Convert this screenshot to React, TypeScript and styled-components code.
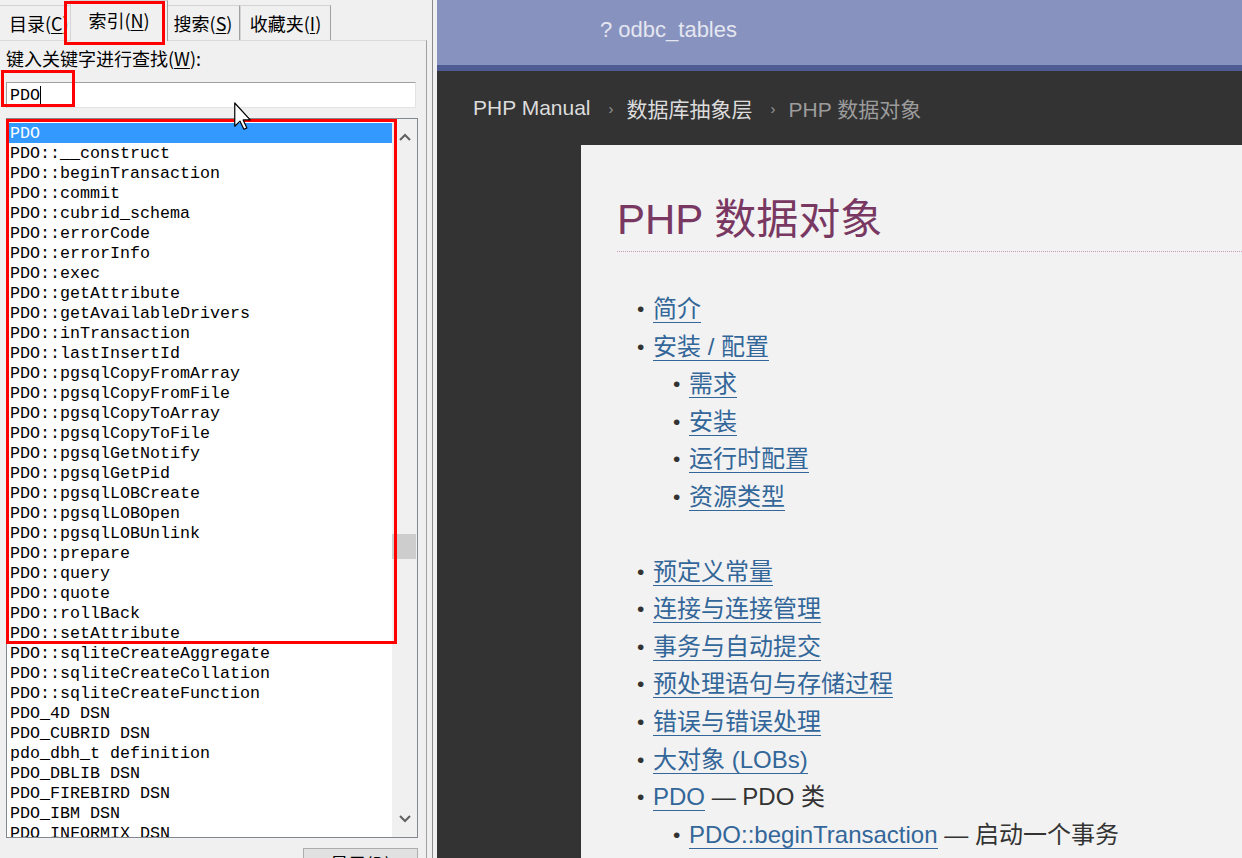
import React from 'react';
import styled, { createGlobalStyle } from 'styled-components';

const GlobalStyle = createGlobalStyle`
  html, body {
    margin: 0;
    padding: 0;
    width: 1242px;
    height: 858px;
    overflow: hidden;
  }
  body {
    font-family: "Noto Sans CJK SC", "Liberation Sans", sans-serif;
  }
`;

const UI_FONT = `"Noto Sans CJK SC", "Liberation Sans", sans-serif`;
const MONO_FONT = `"Liberation Mono", "DejaVu Sans Mono", monospace`;
const WEB_FONT = `"Liberation Sans", "Noto Sans CJK SC", sans-serif`;

const Window = styled.div`
  position: relative;
  display: flex;
  width: 1242px;
  height: 858px;
  overflow: hidden;
`;

/* ---------- left: CHM navigation pane ---------- */

const NavPane = styled.div`
  flex: none;
  width: 437px;
  display: flex;
  background: #f0f0f0;
`;

const TabControl = styled.div`
  width: 427px;
  display: flex;
  flex-direction: column;
`;

const TabRow = styled.div`
  position: relative;
  z-index: 1;
  height: 42px;
  display: flex;
  align-items: flex-end;
`;

const Tab = styled.div<{ $active?: boolean; $w: number }>`
  box-sizing: border-box;
  width: ${p => p.$w}px;
  height: ${p => (p.$active ? 41 : 35)}px;
  margin-bottom: ${p => (p.$active ? -1 : 0)}px;
  margin-left: ${p => (p.$active ? -6 : 0)}px;
  margin-right: ${p => (p.$active ? -2 : 0)}px;
  position: relative;
  z-index: ${p => (p.$active ? 2 : 1)};
  display: flex;
  align-items: center;
  justify-content: center;
  padding-bottom: ${p => (p.$active ? 3 : 1)}px;
  background: #f0f0f0;
  border: 1px solid #d4d4d4;
  border-right-color: #a0a0a0;
  border-bottom: none;
  font-family: ${UI_FONT};
  font-size: 18px;
  color: #000;
  white-space: nowrap;
  overflow: hidden;

  &:first-child {
    justify-content: flex-start;
    padding-left: 9px;
    border-left: none;
  }
`;

const Mnemonic = styled.span`
  text-decoration: underline;
  text-underline-offset: 2px;
`;

const TabPanel = styled.div`
  flex: 1;
  display: flex;
  flex-direction: column;
  padding: 5px 0 0 6px;
  border-top: 1px solid #d9d9d9;
  border-right: 1px solid #a0a0a0;
`;

const FieldLabel = styled.div`
  font-family: ${UI_FONT};
  font-size: 18px;
  line-height: 24px;
  color: #000;
`;

const SearchInput = styled.div`
  box-sizing: border-box;
  width: 410px;
  height: 26px;
  margin-top: 12px;
  padding-left: 3px;
  display: flex;
  align-items: center;
  background: #fff;
  border: 1px solid #e3e3e3;
  border-top-color: #a0a0a0;
  border-left-color: #a0a0a0;
  font-family: ${MONO_FONT};
  font-size: 16.67px;
`;

const Caret = styled.span`
  display: inline-block;
  width: 0;
  height: 18px;
  border-left: 1px solid #000;
`;

const ListBox = styled.div`
  box-sizing: border-box;
  width: 412px;
  height: 720px;
  margin-top: 10px;
  display: flex;
  background: #fff;
  border: 1px solid #828790;
  overflow: hidden;
`;

const Items = styled.div`
  flex: 1;
  padding: 4px 0 0 1px;
  overflow: hidden;
`;

const Item = styled.div<{ $selected?: boolean }>`
  height: 20px;
  line-height: 21px;
  padding-left: 2px;
  font-family: ${MONO_FONT};
  font-size: 16.67px;
  white-space: pre;
  color: ${p => (p.$selected ? '#fff' : '#000')};
  background: ${p => (p.$selected ? '#3399ff' : 'transparent')};
`;

const ScrollBar = styled.div`
  position: relative;
  width: 25px;
  display: flex;
  flex-direction: column;
  justify-content: space-between;
  background: #f0f0f0;
`;

const ScrollArrow = styled.div`
  height: 36px;
  display: flex;
  align-items: center;
  justify-content: center;
`;

const ScrollThumb = styled.div`
  position: absolute;
  left: 0;
  width: 24px;
  height: 25px;
  background: #cdcdcd;
`;

const ButtonRow = styled.div`
  width: 412px;
  display: flex;
  justify-content: flex-end;
  margin-top: 10px;
`;

const PushButton = styled.div`
  box-sizing: border-box;
  width: 115px;
  height: 30px;
  display: flex;
  align-items: flex-start;
  justify-content: center;
  padding-top: 2px;
  background: #e1e1e1;
  border: 1px solid #adadad;
  font-family: ${UI_FONT};
  font-size: 18px;
  line-height: 24px;
`;

const Splitter = styled.div`
  width: 10px;
  display: flex;
  justify-content: center;

  &::after {
    content: '';
    width: 1px;
    background: #8c8c8c;
  }
`;

/* ---------- right: rendered manual page ---------- */

const Page = styled.div`
  flex: 1;
  display: flex;
  flex-direction: column;
  background: #333;
  font-family: ${WEB_FONT};
`;

const Header = styled.div`
  box-sizing: border-box;
  height: 71px;
  padding: 0 0 5px 163px;
  display: flex;
  align-items: center;
  background: #8892bf;
  border-bottom: 6px solid #4f5b93;
  font-size: 22px;
  color: #e4e6f0;
`;

const Breadcrumbs = styled.div`
  height: 74px;
  display: flex;
  align-items: center;
  padding-left: 36px;
  font-size: 21px;
  color: #dcdcdc;
`;

const Crumb = styled.span<{ $current?: boolean }>`
  color: ${p => (p.$current ? '#9c9c9c' : '#dcdcdc')};
`;

const CrumbSep = styled.span`
  margin: 0 13px 0 18px;
  font-size: 15px;
  color: #999;
`;

const Content = styled.div`
  flex: 1;
  margin-left: 144px;
  padding-left: 36px;
  background: #f2f2f2;
  color: #333;
`;

const Title = styled.h1`
  margin: 50px 0 0;
  padding-bottom: 6px;
  font-size: 42px;
  line-height: 50px;
  font-weight: normal;
  color: #793862;
  border-bottom: 1px dotted #c79bb6;
`;

const TocList = styled.ul<{ $gap?: number }>`
  margin: ${p => p.$gap ?? 0}px 0 0;
  padding: 0 0 0 36px;
  list-style: none;
  font-size: 24px;
  line-height: 37.6px;
`;

const TocItem = styled.li`
  position: relative;
  white-space: nowrap;

  &::before {
    content: '•';
    position: absolute;
    left: -16px;
    top: 0;
    font-size: 21px;
    color: #333;
  }
`;

const TocLink = styled.a`
  color: #336699;
  text-decoration: none;
  border-bottom: 1px solid #336699;
`;

/* ---------- annotation overlays ---------- */

const Marker = styled.div<{ $x: number; $y: number; $w: number; $h: number }>`
  position: absolute;
  left: ${p => p.$x}px;
  top: ${p => p.$y}px;
  width: ${p => p.$w}px;
  height: ${p => p.$h}px;
  box-sizing: border-box;
  border: 3px solid #ff0000;
  pointer-events: none;
  z-index: 10;
`;

const Pointer = styled.svg`
  position: absolute;
  left: 234px;
  top: 102px;
  z-index: 11;
`;

const entries = [
  'PDO',
  'PDO::__construct',
  'PDO::beginTransaction',
  'PDO::commit',
  'PDO::cubrid_schema',
  'PDO::errorCode',
  'PDO::errorInfo',
  'PDO::exec',
  'PDO::getAttribute',
  'PDO::getAvailableDrivers',
  'PDO::inTransaction',
  'PDO::lastInsertId',
  'PDO::pgsqlCopyFromArray',
  'PDO::pgsqlCopyFromFile',
  'PDO::pgsqlCopyToArray',
  'PDO::pgsqlCopyToFile',
  'PDO::pgsqlGetNotify',
  'PDO::pgsqlGetPid',
  'PDO::pgsqlLOBCreate',
  'PDO::pgsqlLOBOpen',
  'PDO::pgsqlLOBUnlink',
  'PDO::prepare',
  'PDO::query',
  'PDO::quote',
  'PDO::rollBack',
  'PDO::setAttribute',
  'PDO::sqliteCreateAggregate',
  'PDO::sqliteCreateCollation',
  'PDO::sqliteCreateFunction',
  'PDO_4D DSN',
  'PDO_CUBRID DSN',
  'pdo_dbh_t definition',
  'PDO_DBLIB DSN',
  'PDO_FIREBIRD DSN',
  'PDO_IBM DSN',
  'PDO_INFORMIX DSN',
];

const Chevron = ({ up }: { up?: boolean }) => (
  <svg width="12" height="8" viewBox="0 0 12 8">
    <polyline
      points={up ? '1,7 6,2 11,7' : '1,1 6,6 11,1'}
      fill="none"
      stroke="#606060"
      strokeWidth="2"
    />
  </svg>
);

const App = () => {
  const scrollPos = 0.61; // thumb position inside the track
  const trackTop = 36;
  const trackLen = 718 - 72 - 25;

  return (
    <>
      <GlobalStyle />
      <Window>
        <NavPane>
          <TabControl>
            <TabRow>
              <Tab $w={76}>目录(<Mnemonic>C</Mnemonic>)</Tab>
              <Tab $w={98} $active>索引(<Mnemonic>N</Mnemonic>)</Tab>
              <Tab $w={74}>搜索(<Mnemonic>S</Mnemonic>)</Tab>
              <Tab $w={91}>收藏夹(<Mnemonic>I</Mnemonic>)</Tab>
            </TabRow>
            <TabPanel>
              <FieldLabel>键入关键字进行查找(<Mnemonic>W</Mnemonic>):</FieldLabel>
              <SearchInput>
                PDO<Caret />
              </SearchInput>
              <ListBox>
                <Items>
                  {entries.map((e, i) => (
                    <Item key={e} $selected={i === 0}>{e}</Item>
                  ))}
                </Items>
                <ScrollBar>
                  <ScrollArrow><Chevron up /></ScrollArrow>
                  <ScrollThumb style={{ top: trackTop + trackLen * scrollPos }} />
                  <ScrollArrow><Chevron /></ScrollArrow>
                </ScrollBar>
              </ListBox>
              <ButtonRow>
                <PushButton>显示(<Mnemonic>D</Mnemonic>)</PushButton>
              </ButtonRow>
            </TabPanel>
          </TabControl>
          <Splitter />
        </NavPane>

        <Page>
          <Header>? odbc_tables</Header>
          <Breadcrumbs>
            <Crumb>PHP Manual</Crumb>
            <CrumbSep>›</CrumbSep>
            <Crumb>数据库抽象层</Crumb>
            <CrumbSep>›</CrumbSep>
            <Crumb $current>PHP 数据对象</Crumb>
          </Breadcrumbs>
          <Content>
            <Title>PHP 数据对象</Title>
            <TocList $gap={38}>
              <TocItem><TocLink>简介</TocLink></TocItem>
              <TocItem>
                <TocLink>安装 / 配置</TocLink>
                <TocList>
                  <TocItem><TocLink>需求</TocLink></TocItem>
                  <TocItem><TocLink>安装</TocLink></TocItem>
                  <TocItem><TocLink>运行时配置</TocLink></TocItem>
                  <TocItem><TocLink>资源类型</TocLink></TocItem>
                </TocList>
              </TocItem>
            </TocList>
            <TocList $gap={37}>
              <TocItem><TocLink>预定义常量</TocLink></TocItem>
              <TocItem><TocLink>连接与连接管理</TocLink></TocItem>
              <TocItem><TocLink>事务与自动提交</TocLink></TocItem>
              <TocItem><TocLink>预处理语句与存储过程</TocLink></TocItem>
              <TocItem><TocLink>错误与错误处理</TocLink></TocItem>
              <TocItem><TocLink>大对象 (LOBs)</TocLink></TocItem>
              <TocItem>
                <TocLink>PDO</TocLink> — PDO 类
                <TocList>
                  <TocItem><TocLink>PDO::beginTransaction</TocLink> — 启动一个事务</TocItem>
                </TocList>
              </TocItem>
            </TocList>
          </Content>
        </Page>

        <Marker $x={64} $y={1} $w={101} $h={44} />
        <Marker $x={1} $y={70} $w={74} $h={37} />
        <Marker $x={6} $y={119} $w={391} $h={525} />

        <Pointer width="18" height="29" viewBox="0 0 12 19">
          <path
            d="M0.5 0.5 L0.5 16 L4 12.6 L6.6 18 L8.6 17.1 L6.1 11.8 L10.8 11.8 Z"
            fill="#fff"
            stroke="#000"
            strokeWidth="0.8"
            strokeLinejoin="round"
          />
        </Pointer>
      </Window>
    </>
  );
};

export default App;
